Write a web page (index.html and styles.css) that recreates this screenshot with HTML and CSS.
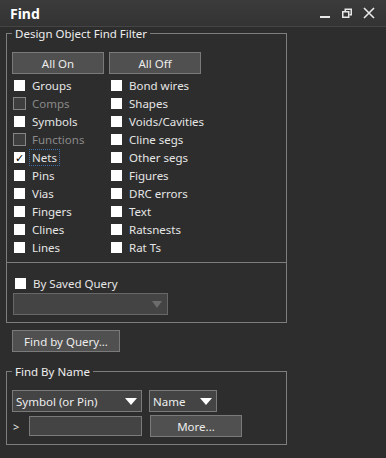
FILE: index.html
```html
<!DOCTYPE html>
<html lang="en">

<head>
  <meta charset="UTF-8">
  <title>Find</title>

  <link rel="stylesheet" href="styles.css">
</head>

<body>
  <div class="titlebar">
    <span class="title">Find</span>
    <div class="controls">
      <svg width="12" height="12" viewBox="0 0 12 12"><rect x="1" y="9" width="10" height="2" fill="#e8e8e8"/></svg>
      <svg width="12" height="12" viewBox="0 0 12 12" fill="none" stroke="#e8e8e8" stroke-width="1.5"><rect x="1.75" y="4.75" width="6" height="5.5"/><path d="M4.25 4.5V2.25h6v5.5H8.5"/></svg>
      <svg width="12" height="12" viewBox="0 0 12 12" stroke="#e8e8e8" stroke-width="1.6"><path d="M1 1l10 10M11 1L1 11"/></svg>
    </div>
  </div>

  <div class="panel">
    <fieldset class="group filter">
      <legend>Design Object Find Filter</legend>
      <div class="toggles">
        <button class="btn wide">All On</button>
        <button class="btn wide">All Off</button>
      </div>

      <div class="checks">
        <label class="check"><span class="box"></span>Groups</label>
        <label class="check"><span class="box"></span>Bond wires</label>
        <label class="check off"><span class="box"></span>Comps</label>
        <label class="check"><span class="box"></span>Shapes</label>
        <label class="check"><span class="box"></span>Symbols</label>
        <label class="check"><span class="box"></span>Voids/Cavities</label>
        <label class="check off"><span class="box"></span>Functions</label>
        <label class="check"><span class="box"></span>Cline segs</label>
        <label class="check"><span class="box on">&#10003;</span><span class="focus">Nets</span></label>
        <label class="check"><span class="box"></span>Other segs</label>
        <label class="check"><span class="box"></span>Pins</label>
        <label class="check"><span class="box"></span>Figures</label>
        <label class="check"><span class="box"></span>Vias</label>
        <label class="check"><span class="box"></span>DRC errors</label>
        <label class="check"><span class="box"></span>Fingers</label>
        <label class="check"><span class="box"></span>Text</label>
        <label class="check"><span class="box"></span>Clines</label>
        <label class="check"><span class="box"></span>Ratsnests</label>
        <label class="check"><span class="box"></span>Lines</label>
        <label class="check"><span class="box"></span>Rat Ts</label>
      </div>

      <div class="saved">
        <label class="check"><span class="box"></span>By Saved Query</label>
        <div class="combo disabled saved-combo"><span></span><span class="arrow"></span></div>
      </div>
    </fieldset>

    <button class="btn query">Find by Query...</button>

    <fieldset class="group byname">
      <legend>Find By Name</legend>
      <div class="row">
        <div class="combo type-combo"><span>Symbol (or Pin)</span><span class="arrow"></span></div>
        <div class="combo name-combo"><span>Name</span><span class="arrow"></span></div>
      </div>
      <div class="row">
        <span class="prompt">&gt;</span>
        <input type="text" class="field">
        <button class="btn wide">More...</button>
      </div>
    </fieldset>
  </div>
</body>

</html>
```

FILE: styles.css
```css
body {
  font-family: 'Noto Sans', sans-serif;
  font-size: 11px;
  background: #2d2d2d;
  color: #e6e6e6;
  margin: 0;
  padding: 0;
}

.titlebar {
  height: 26px;
  display: flex;
  align-items: center;
  justify-content: space-between;
  padding: 0 10px;
  background: linear-gradient(#3b3b3b, #333);
  border-bottom: 1px solid #454545;
}

.title {
  font-size: 14px;
  font-weight: bold;
  color: #fff;
}

.controls {
  display: flex;
  gap: 10px;
  padding-right: 1px;
}

.controls svg {
  display: block;
}

.panel {
  padding: 0 6px;
}

.group {
  width: 279px;
  margin: 0;
  padding: 0;
  border: 1px solid #7d7d7d;
}

.group legend {
  margin-left: 5px;
  padding: 0 3px;
  line-height: 13px;
  font-size: 11.5px;
  color: #eee;
}

.toggles {
  display: flex;
  gap: 5px;
  margin: 12px 0 0 5px;
}

.btn {
  height: 22px;
  padding: 0;
  background: #505050;
  border: 1px solid #7a7a7a;
  color: #ececec;
  font-family: inherit;
  font-size: 11.5px;
}

.btn.wide {
  width: 92px;
}

.checks {
  display: grid;
  grid-template-columns: 97px 97px;
  grid-auto-rows: 18px;
  margin: 2px 0 0 7px;
  font-size: 11.5px;
}

.check {
  display: flex;
  align-items: center;
  gap: 7px;
  white-space: nowrap;
}

.box {
  width: 11px;
  height: 11px;
  background: #fff;
  flex: none;
  color: #000;
  font-size: 11px;
  line-height: 11px;
  text-align: center;
}

.check.off {
  color: #8a8a8a;
}

.check.off .box {
  width: 11px;
  height: 11px;
  margin: 0 -1px 0 -1px;
  background: #3e3e3e;
  border: 1px solid #858585;
}

.focus {
  margin: 0 -3px;
  padding: 0 2px;
  border: 1px dotted #3f6ea8;
  line-height: 15px;
}

.saved {
  margin-top: 6px;
  border-top: 1px solid #7d7d7d;
  padding: 11px 0 7px 6px;
  font-size: 11.5px;
}

.saved .check {
  height: 18px;
  padding-left: 2px;
}

.combo {
  height: 20px;
  display: flex;
  align-items: center;
  justify-content: space-between;
  padding: 0 4px 0 3px;
  background: #444;
  border: 1px solid #7a7a7a;
  color: #eee;
  font-size: 11.5px;
}

.arrow {
  width: 0;
  height: 0;
  border-left: 6px solid transparent;
  border-right: 6px solid transparent;
  border-top: 7px solid #fff;
}

.combo.disabled {
  border-color: #676767;
}

.combo.disabled .arrow {
  border-left-width: 5px;
  border-right-width: 5px;
  border-top: 7px solid #6c6c6c;
  margin-right: 1px;
}

.saved-combo {
  width: 146px;
  margin: 1px 0 0 0;
}

.query {
  width: 108px;
  margin: 7px 0 0 6px;
  display: block;
}

.byname {
  margin-top: 13px;
}

.row {
  display: flex;
  align-items: center;
  margin-left: 5px;
}

.row + .row {
  margin-top: 3px;
}

.byname .row:first-of-type {
  margin-top: 12px;
}

.byname .row:last-child {
  margin-bottom: 7px;
}

.type-combo {
  width: 121px;
  margin-right: 7px;
}

.name-combo {
  width: 59px;
}

.prompt {
  width: 16px;
  padding-left: 1px;
  font-size: 11px;
}

.field {
  width: 109px;
  height: 18px;
  margin: 0 8px 0 0;
  padding: 0 1px;
  background: #444;
  border: 1px solid #7a7a7a;
  color: #eee;
}
```
